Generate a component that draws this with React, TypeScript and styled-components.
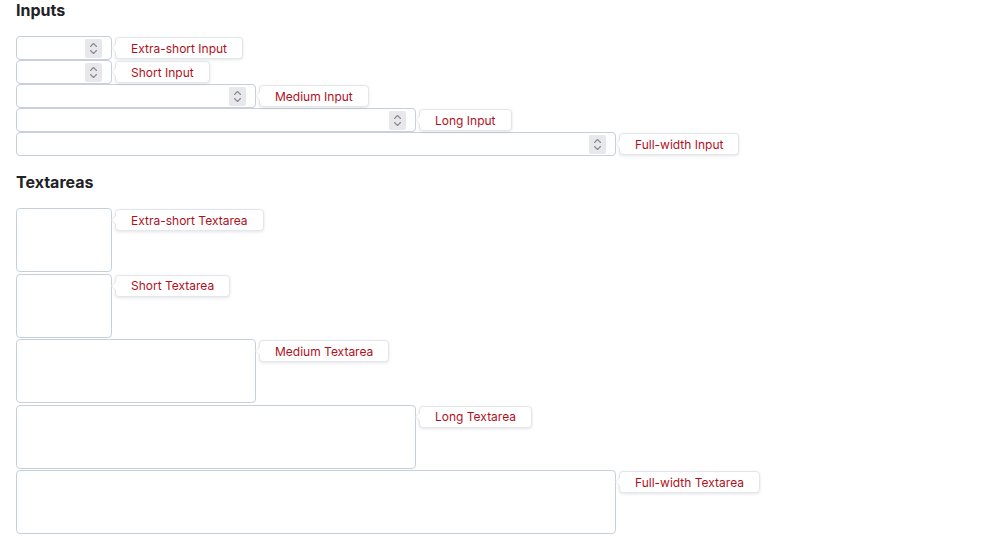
import React from "react";
import styled, { createGlobalStyle } from "styled-components";

const Global = createGlobalStyle`
  html, body { margin: 0; padding: 0; background: #ffffff; }
  body { font-family: Inter, "Liberation Sans", Arial, sans-serif; color: #222; }
`;

const Page = styled.div`
  padding: 0 16px;
  display: flex;
  flex-direction: column;
`;

const Heading = styled.h2<{ $top: number; $bottom: number }>`
  font-family: Inter, "Liberation Sans", Arial, sans-serif;
  font-size: 16px;
  font-weight: 700;
  line-height: 20px;
  margin: ${(p) => p.$top}px 0 ${(p) => p.$bottom}px;
  color: #1f2328;
`;

const Stack = styled.div<{ $gap: number }>`
  display: flex;
  flex-direction: column;
  gap: ${(p) => p.$gap}px;
`;

const Row = styled.div`
  display: flex;
  align-items: flex-start;
`;

const InputBox = styled.div<{ $w: number }>`
  box-sizing: border-box;
  width: ${(p) => p.$w}px;
  height: 24px;
  border: 1px solid #c6d0da;
  border-radius: 4px;
  background: #fff;
  display: flex;
  align-items: center;
  padding-right: 9px;
  flex: none;
`;

const Field = styled.input`
  flex: 1;
  min-width: 0;
  border: none;
  outline: none;
  background: transparent;
  height: 100%;
  padding: 0 6px;
  font: inherit;
`;

const Spinner = styled.div`
  width: 17px;
  height: 19px;
  background: #e8e8ec;
  border-radius: 2px;
  display: flex;
  align-items: center;
  justify-content: center;
  flex: none;
`;

const TextBox = styled.textarea<{ $w: number }>`
  box-sizing: border-box;
  width: ${(p) => p.$w}px;
  height: 64px;
  border: 1px solid #c6d0da;
  border-radius: 4px;
  resize: none;
  margin: 0;
  padding: 4px;
  flex: none;
  outline: none;
  font: inherit;
`;

const Bubble = styled.div`
  position: relative;
  margin-left: 3px;
  margin-top: 1px;
  height: 22px;
  box-sizing: border-box;
  padding: 0 15px;
  display: flex;
  align-items: center;
  background: #fff;
  border: 1px solid #e3e7ec;
  border-radius: 4px;
  box-shadow: 0 1px 3px rgba(30, 40, 60, 0.12);
  font-family: Inter, "Liberation Sans", Arial, sans-serif;
  font-size: 12px;
  color: #b0101c;
  white-space: nowrap;

  &::before {
    content: "";
    position: absolute;
    left: -5px;
    top: 50%;
    margin-top: -5px;
    width: 0;
    height: 0;
    border-top: 5px solid transparent;
    border-bottom: 5px solid transparent;
    border-right: 5px solid #e3e7ec;
  }
  &::after {
    content: "";
    position: absolute;
    left: -4px;
    top: 50%;
    margin-top: -4px;
    width: 0;
    height: 0;
    border-top: 4px solid transparent;
    border-bottom: 4px solid transparent;
    border-right: 4px solid #fff;
  }
`;

const SpinIcon = () => (
  <svg width="9" height="13" viewBox="0 0 9 13" fill="none">
    <path d="M1.5 4.5 L4.5 1.5 L7.5 4.5" stroke="#8a8a90" strokeWidth="1.1" strokeLinecap="round" strokeLinejoin="round" />
    <path d="M1.5 8.5 L4.5 11.5 L7.5 8.5" stroke="#8a8a90" strokeWidth="1.1" strokeLinecap="round" strokeLinejoin="round" />
  </svg>
);

const sizes = [
  { w: 96, name: "Extra-short" },
  { w: 96, name: "Short" },
  { w: 240, name: "Medium" },
  { w: 400, name: "Long" },
  { w: 600, name: "Full-width" },
];

export default function App() {
  return (
    <>
      <Global />
      <Page>
        <Heading $top={0} $bottom={16}>Inputs</Heading>
        <Stack $gap={0}>
          {sizes.map((s) => (
            <Row key={s.name}>
              <InputBox $w={s.w}>
                <Field type="text" />
                <Spinner>
                  <SpinIcon />
                </Spinner>
              </InputBox>
              <Bubble>{s.name} Input</Bubble>
            </Row>
          ))}
        </Stack>
        <Heading $top={16} $bottom={16}>Textareas</Heading>
        <Stack $gap={1.5}>
          {sizes.map((s) => (
            <Row key={s.name}>
              <TextBox $w={s.w} />
              <Bubble>{s.name} Textarea</Bubble>
            </Row>
          ))}
        </Stack>
      </Page>
    </>
  );
}
